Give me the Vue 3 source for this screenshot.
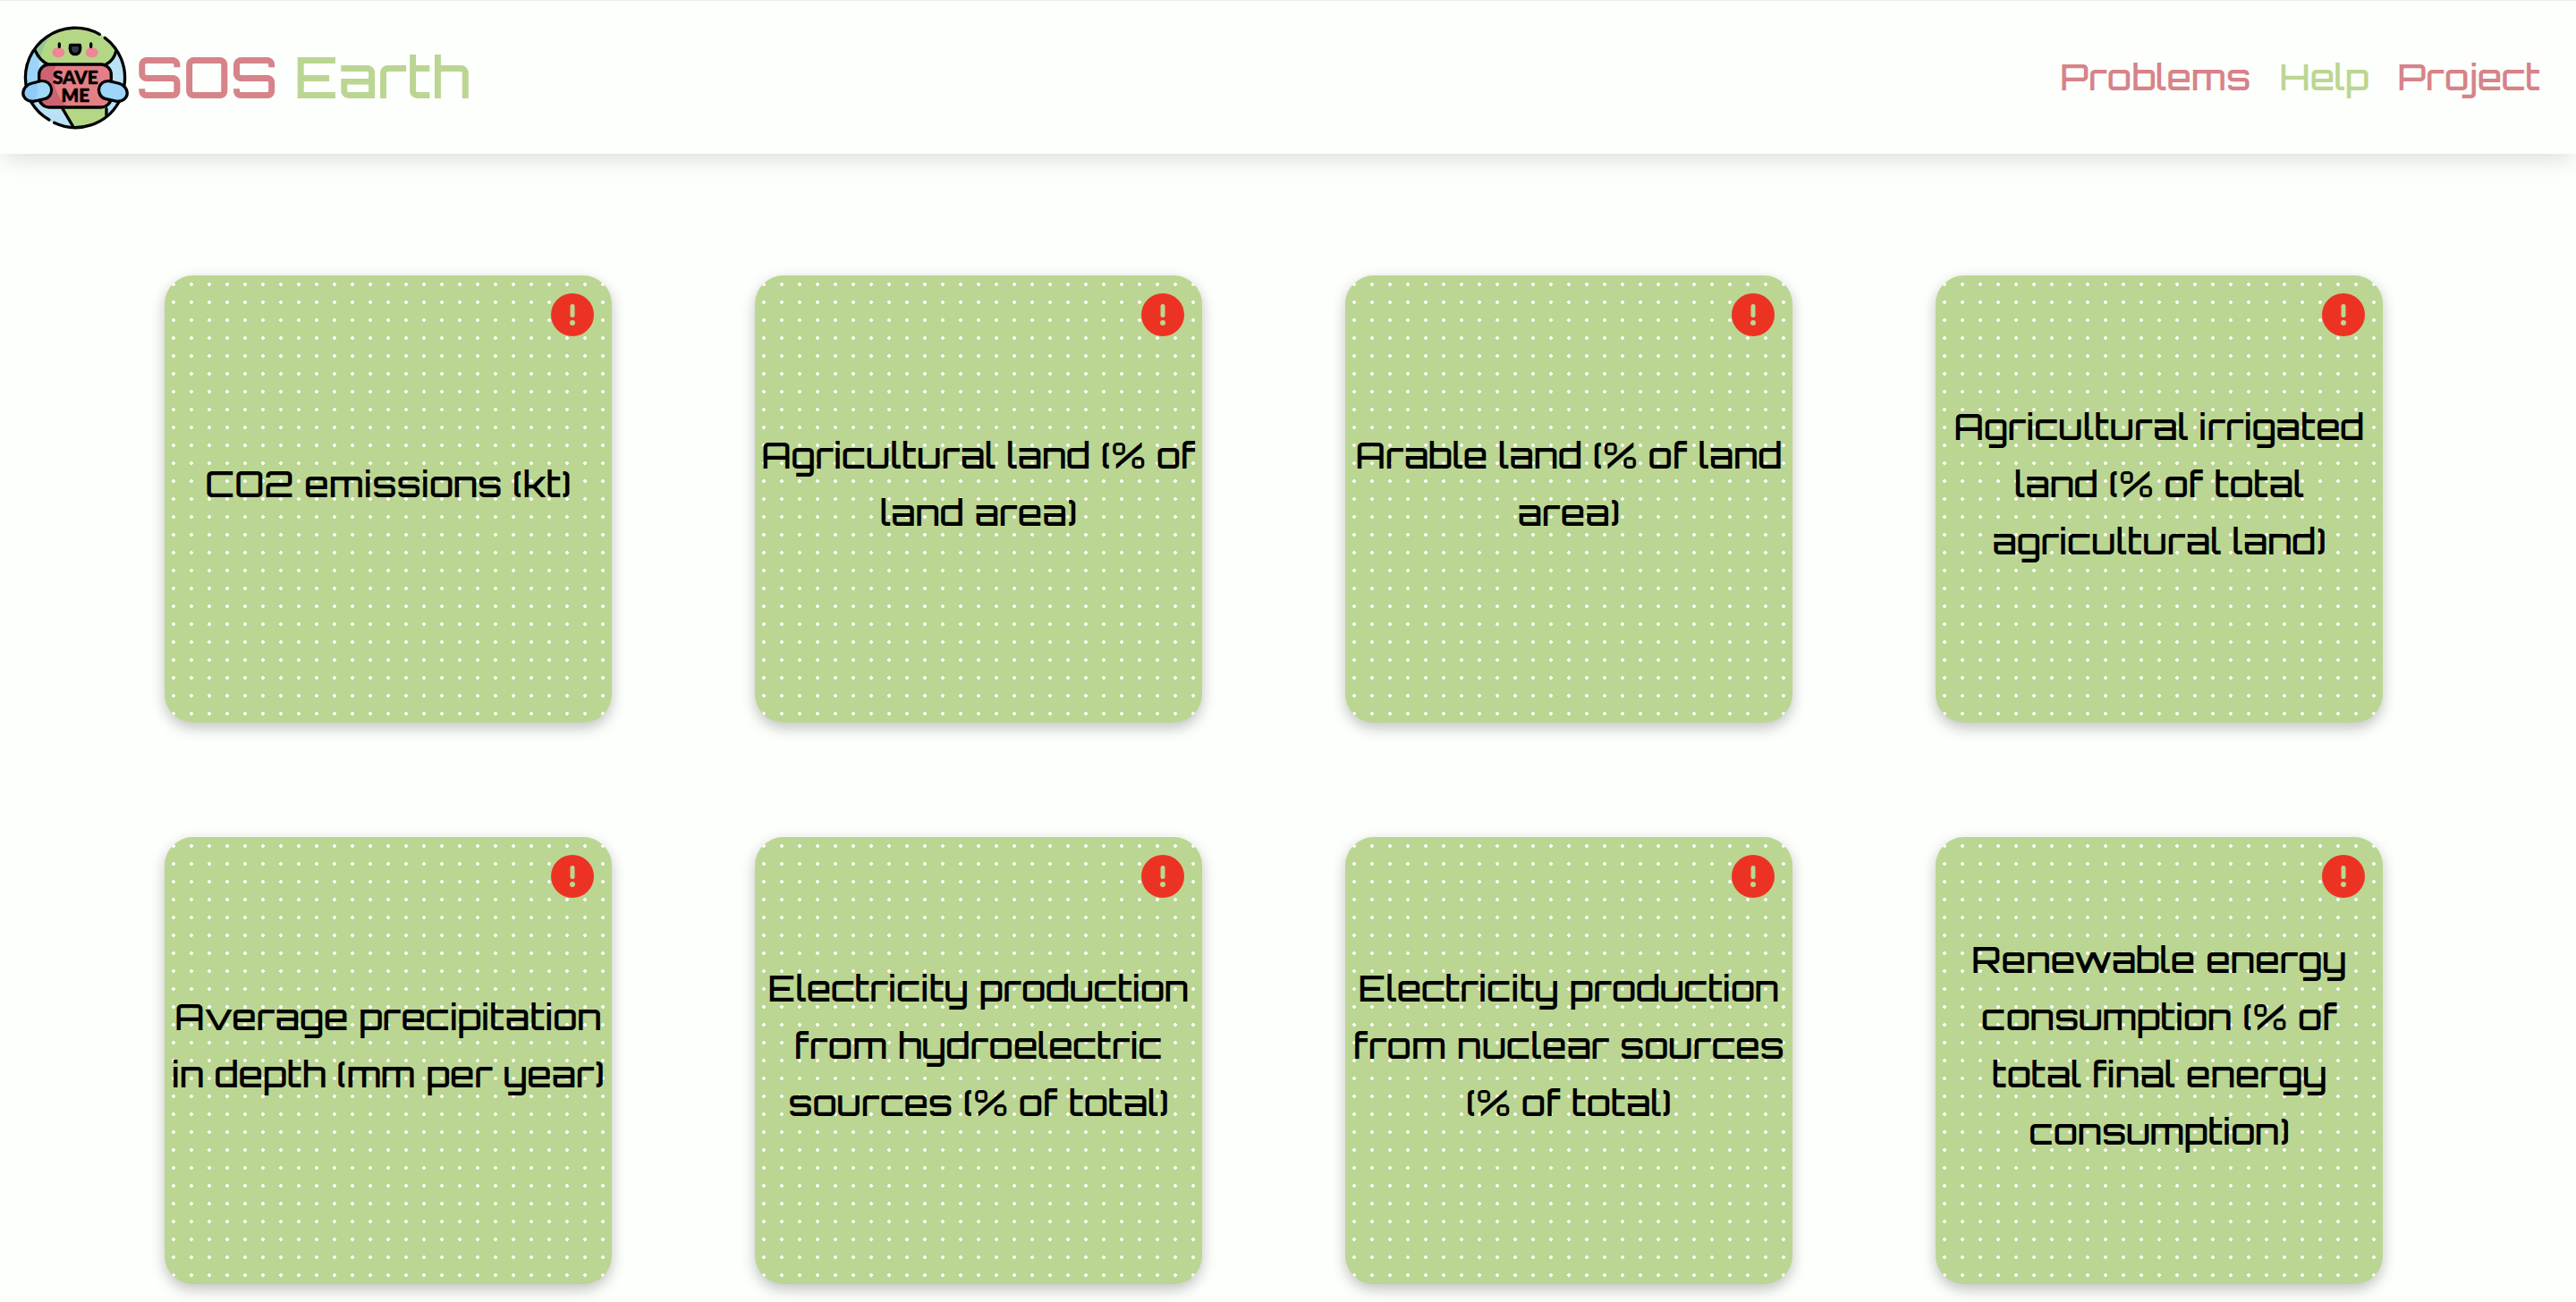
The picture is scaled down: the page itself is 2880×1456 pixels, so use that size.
<script setup>
const links = [
  { label: 'Problems', active: false },
  { label: 'Help', active: true },
  { label: 'Project', active: false },
]

const indicators = [
  ['CO2 emissions (kt)'],
  ['Agricultural land (% of', 'land area)'],
  ['Arable land (% of land', 'area)'],
  ['Agricultural irrigated', 'land (% of total', 'agricultural land)'],
  ['Average precipitation', 'in depth (mm per year)'],
  ['Electricity production', 'from hydroelectric', 'sources (% of total)'],
  ['Electricity production', 'from nuclear sources', '(% of total)'],
  ['Renewable energy', 'consumption (% of', 'total final energy', 'consumption)'],
]
</script>

<template>
  <div class="page">
    <header class="header">
      <a class="brand" href="#">
        <svg class="logo" viewBox="72 78 360 360" aria-hidden="true">
          <defs>
            <clipPath id="globe"><circle cx="252" cy="261" r="168" /></clipPath>
          </defs>
          <g clip-path="url(#globe)">
            <rect x="80" y="90" width="344" height="344" fill="#bae2f7" />
            <path d="M80 90H130V340H80Z" fill="#9bd5f7" />
            <path d="M112 160 C135 200 150 215 172 216 H345 C370 205 388 185 392 165 L360 90 H150Z" fill="#b4d786" />
            <path d="M80 180 L160 90 H215 C170 110 145 150 135 192 L118 170Z" fill="#93c796" />
            <path d="M208 362 L248 434 H330 L357 395 V362Z" fill="#b4d786" />
          </g>
          <g fill="none" stroke="#000" stroke-width="10" stroke-linecap="round">
            <path d="M334 115 A167 167 0 0 0 87 285 M105 343 A167 167 0 0 0 165 402" />
            <path d="M352 127 A167 167 0 0 1 417 285 M399 342 A167 167 0 0 1 182 412" />
            <path d="M117 168 C130 196 143 208 160 215 M389 172 C384 193 370 209 354 217 M210 365 L246 426 M357 365 V388" />
          </g>
          <rect x="131" y="216" width="242" height="144" rx="34" fill="#e47f86" />
          <path d="M165 216 H190 C165 260 190 330 228 360 H165 A34 34 0 0 1 131 326 V250 A34 34 0 0 1 165 216Z" fill="#cc6372" />
          <rect x="131" y="216" width="242" height="144" rx="34" fill="none" stroke="#000" stroke-width="10" />
          <g stroke="#000" stroke-width="10">
            <path d="M108 279 L138 272 C180 268 184 326 148 332 L112 340 C67 341 66 289 108 279Z" fill="#8ecbf7" />
            <path d="M396 279 L366 272 C324 268 320 326 356 332 L392 340 C437 341 438 289 396 279Z" fill="#9bd5f7" />
          </g>
          <path d="M125 280 L140 277 C174 276 177 321 146 327 L119 333 Q132 305 125 280Z" fill="#9fd7f8" />
          <ellipse cx="196" cy="176" rx="21" ry="17" fill="#ed8795" />
          <ellipse cx="308" cy="176" rx="21" ry="17" fill="#ed8795" />
          <path d="M199 147V157 M305 147V157" stroke="#000" stroke-width="10" stroke-linecap="round" />
          <path d="M236 151 H268 C272 172 264 182 252 182 C240 182 232 172 236 151Z" fill="#343c4c" stroke="#000" stroke-width="10" stroke-linejoin="round" />
          <text class="sign" x="253" y="283">SAVE</text>
          <text class="sign" x="253" y="341">ME</text>
        </svg>
        <span class="title"><span class="rose">SOS</span> Earth</span>
      </a>
      <nav class="nav">
        <a
          v-for="link in links"
          :key="link.label"
          href="#"
          class="link"
          :class="{ active: link.active }"
        >{{ link.label }}</a>
      </nav>
    </header>

    <main class="grid">
      <article v-for="(lines, i) in indicators" :key="i" class="card">
        <h2 class="name">
          <span v-for="line in lines" :key="line" class="line">{{ line }}</span>
        </h2>
        <button class="alert" type="button" :aria-label="'Details: ' + lines.join(' ')">
          <svg viewBox="0 0 48 48" aria-hidden="true">
            <circle cx="24" cy="24" r="24" fill="#ec3323" />
            <rect x="21.5" y="12" width="5" height="15" rx="2.5" fill="#bbd692" />
            <circle cx="24" cy="33" r="3" fill="#bbd692" />
          </svg>
        </button>
      </article>
    </main>
  </div>
</template>

<style>
body {
  margin: 0;
  background: #fdfffc;
}
</style>

<style scoped>
.page {
  font-family: Orbitron, "DejaVu Sans", sans-serif;
  font-weight: 500;
}

.header {
  display: flex;
  align-items: center;
  justify-content: space-between;
  height: 172px;
  padding: 0 40px 0 24px;
  background: #fdfffc;
  box-shadow: inset 0 1px #ededed, 0 10px 24px -4px rgba(0, 0, 0, 0.13);
}

.brand {
  display: flex;
  align-items: center;
  gap: 8px;
  color: #bbd692;
  text-decoration: none;
}

.logo {
  width: 120px;
  height: 120px;
}

.sign {
  font-family: Lato, sans-serif;
  font-size: 62px;
  font-weight: 900;
  text-anchor: middle;
  stroke: #000;
  stroke-width: 2px;
  stroke-linejoin: round;
}

.title {
  font-size: 64px;
  line-height: 80px;
}

.rose {
  color: #d68389;
}

.nav {
  display: flex;
  gap: 32px;
}

.link {
  color: #d68389;
  font-size: 40px;
  line-height: 64px;
  text-decoration: none;
}

.link.active {
  color: #bbd692;
}

.grid {
  display: grid;
  grid-template-columns: repeat(4, 1fr);
  justify-items: center;
  row-gap: 128px;
  padding: 136px 136px 20px 104px;
}

.card {
  position: relative;
  display: flex;
  align-items: center;
  justify-content: center;
  box-sizing: border-box;
  width: 500px;
  height: 500px;
  padding-bottom: 34px;
  border-radius: 32px;
  background: #bbd692 radial-gradient(circle, #fff 2px, transparent 2px) 0 0 / 20px 20px;
  box-shadow: 0 6px 16px rgba(0, 0, 0, 0.24);
}

.name {
  margin: 0;
  color: #000;
  font-size: 40px;
  font-weight: 500;
  line-height: 64px;
  text-align: center;
  white-space: nowrap;
}

.line {
  display: block;
}

.alert {
  position: absolute;
  top: 20px;
  right: 20px;
  width: 48px;
  height: 48px;
  padding: 0;
  border: 0;
  border-radius: 50%;
  background: none;
  cursor: pointer;
}

.alert svg {
  display: block;
  width: 48px;
  height: 48px;
}
</style>
